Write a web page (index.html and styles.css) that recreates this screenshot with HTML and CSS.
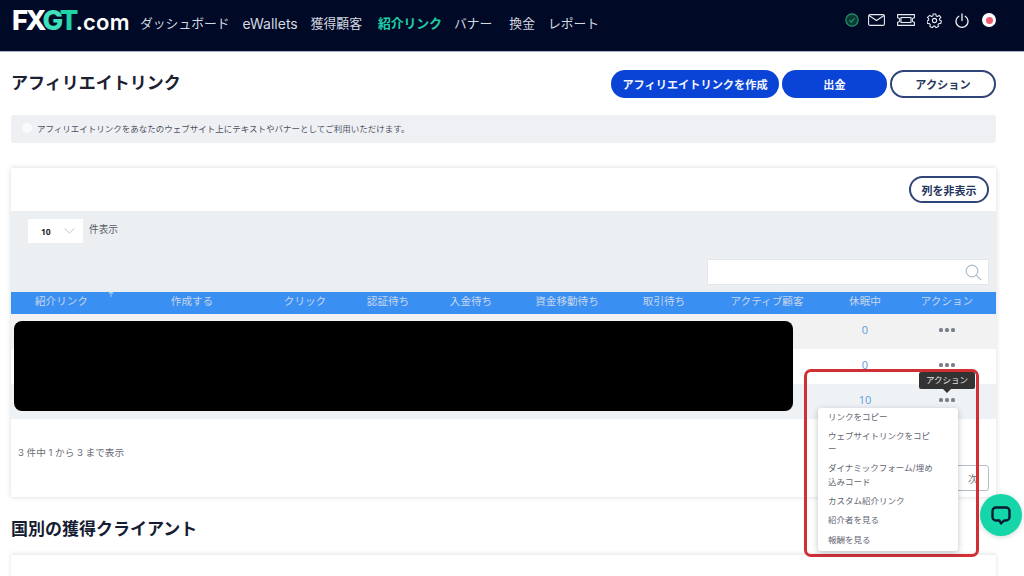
FILE: index.html
```html
<!DOCTYPE html>
<html lang="ja">
<head>
<meta charset="utf-8">
<title>アフィリエイトリンク</title>
<link rel="stylesheet" href="styles.css">
</head>
<body>
<header class="topbar">
  <div class="logo"><span>FX</span><span class="logo-g">G</span><span class="logo-t">T</span><span class="logo-com">.com</span></div>
  <nav class="nav">
    <a>ダッシュボード</a><a class="nav-latin">eWallets</a><a>獲得顧客</a><a class="active">紹介リンク</a><a class="nav-tight">バナー</a><a class="nav-wide">換金</a><a>レポート</a>
  </nav>
  <div class="tools">
    <svg class="tool tool-check" width="14" height="14" viewBox="0 0 16 16" fill="#0c3a35" stroke="#1f9d6e" stroke-width="1.300"><circle cx="8" cy="8" r="7"/><path fill="none" d="M5 8.200l2.200 2.200 3.800-4.400"/></svg>
    <svg class="tool" width="17" height="12" viewBox="0 0 17 12" fill="none" stroke="#e8eaf0" stroke-width="1.100"><rect x=".6" y=".6" width="15.800" height="10.800" rx="1.500"/><path d="M1 1.500l7.500 5 7.500-5"/></svg>
    <svg class="tool" width="18" height="12" viewBox="0 0 18 12" fill="none" stroke="#e8eaf0" stroke-width="1.100"><path d="M.6.600h16.800v3.200a2.200 2.200 0 0 0 0 4.400v3.200H.6V8.200a2.200 2.200 0 0 0 0-4.400z"/><rect x="4" y="3.500" width="10" height="5"/></svg>
    <svg class="tool" width="15" height="15" viewBox="0 0 24 24" fill="none" stroke="#e8eaf0" stroke-width="1.700" stroke-linejoin="round"><circle cx="12" cy="12" r="3.400"/><path d="M10 1.500h4l.7 3.200 2 .9 2.800-1.800 2.700 3.300-2.200 2.300.4 2.100 2.600 1.300-1 4.100-3 .1-1.400 1.700.7 3-3.900 1.800-1.900-2.500h-2.100l-1.900 2.500-3.900-1.800.7-3-1.400-1.700-3-.1-1-4.100 2.600-1.300.4-2.100-2.200-2.300L4.500 3.800l2.800 1.800 2-.9z"/></svg>
    <svg class="tool tool-far" width="14" height="15" viewBox="0 0 14 15" fill="none" stroke="#f2f3f6" stroke-width="1.300" stroke-linecap="round"><path d="M7 1v6.500"/><path d="M3.800 3.300a6 6 0 1 0 6.400 0"/></svg>
    <span class="flag tool-far"><i></i></span>
  </div>
</header>

<main class="page">
  <div class="title-row">
    <h1>アフィリエイトリンク</h1>
    <div class="actions">
      <button class="btn btn-solid btn-create">アフィリエイトリンクを作成</button>
      <button class="btn btn-solid btn-wd">出金</button>
      <button class="btn btn-line btn-action">アクション</button>
    </div>
  </div>
  <div class="notice"><span class="notice-dot"></span>アフィリエイトリンクをあなたのウェブサイト上にテキストやバナーとしてご利用いただけます。</div>

  <section class="card">
    <div class="card-top"><button class="btn btn-line btn-cols">列を非表示</button></div>
    <div class="filters">
      <div class="length">
        <div class="select"><b>10</b><svg width="11" height="6" viewBox="0 0 11 6" fill="none" stroke="#c3c9cf"><path d="M.5.500l5 4.500 5-4.500"/></svg></div>
        <span>件表示</span>
      </div>
      <div class="search">
        <svg width="17" height="17" viewBox="0 0 17 17" fill="none" stroke="#aebccb" stroke-width="1.200"><circle cx="7" cy="7" r="5.800"/><path d="M11.200 11.200l5 5"/></svg>
      </div>
    </div>
    <div class="table">
      <div class="thead">
        <span class="first">紹介リンク<i class="sort">↑</i></span><span>作成する</span><span>クリック</span><span>認証待ち</span><span>入金待ち</span><span>資金移動待ち</span><span>取引待ち</span><span>アクティブ顧客</span><span>休眠中</span><span>アクション</span>
      </div>
      <div class="row row-grey"><a class="num">0</a><span class="dots"><i></i><i></i><i></i></span></div>
      <div class="row"><a class="num">0</a><span class="dots"><i></i><i></i><i></i></span></div>
      <div class="row row-blue"><a class="num">10</a><span class="dots"><i></i><i></i><i></i></span></div>
    </div>
    <div class="card-foot">
      <span class="info">3 件中 1 から 3 まで表示</span>
      <button class="next">次</button>
    </div>
  </section>

  <h2>国別の獲得クライアント</h2>
  <section class="card card-next"></section>

  <div class="redact"></div>
  <div class="redbox"></div>
  <div class="tooltip">アクション</div>
  <ul class="menu">
    <li>リンクをコピー</li>
    <li>ウェブサイトリンクをコピ<br>ー</li>
    <li>ダイナミックフォーム/埋め<br>込みコード</li>
    <li>カスタム紹介リンク</li>
    <li>紹介者を見る</li>
    <li>報酬を見る</li>
  </ul>
</main>

<div class="chat">
  <svg width="20" height="19" viewBox="0 0 20 19" fill="none" stroke="#0a1a33" stroke-width="2.400" stroke-linejoin="round"><path d="M5 1.500h10a3.500 3.500 0 0 1 3.500 3.500v6a3.500 3.500 0 0 1-3.500 3.500h-2l-3 3-1.500-3H5A3.500 3.500 0 0 1 1.500 11V5A3.500 3.500 0 0 1 5 1.500z"/></svg>
</div>
</body>
</html>
```
FILE: styles.css
```css
* { box-sizing: border-box; }
html, body { margin: 0; padding: 0; height: 576px; overflow: hidden; background: #fff; }
body { font-family: Inter, "Noto Sans CJK JP", "Noto Sans", sans-serif; color: #1d2233; position: relative; }

.topbar { height: 52px; background: #000a26; border-bottom: 1px solid #a9b4c8; display: flex; align-items: flex-start; padding-left: 12px; }
.logo { width: 128px; height: 40px; font-family: Inter, sans-serif; font-size: 27.500px; font-weight: 800; color: #fff; letter-spacing: -2.500px; line-height: 40px; white-space: nowrap; }
.logo-g { color: #3fe0bd; }
.logo-t { color: #1fd3a9; }
.logo-com { font-size: 22px; font-weight: 600; letter-spacing: .2px; }
.nav { display: flex; gap: 13px; font-size: 12.800px; line-height: 48px; color: #d5d9e2; white-space: nowrap; }
.nav .nav-latin { font-size: 14px; }
.nav .active { color: #1fd0a6; font-weight: 700; margin-left: 3px; }
.nav .nav-tight { margin-left: -1px; }
.nav .nav-wide { margin-left: 4px; }
.tools { margin-left: auto; margin-right: 28px; margin-top: 14px; display: flex; align-items: center; gap: 12px; height: 12px; }
.tool { display: block; flex: none; }
.tool-check { margin-right: -3px; }
.tool-far { margin-left: 1px; }
.flag { width: 14px; height: 14px; border-radius: 50%; background: #fff; display: flex; align-items: center; justify-content: center; }
.flag i { width: 7px; height: 7px; border-radius: 50%; background: #ef5a6e; }

.page { position: relative; padding: 0 28px 0 11px; height: 524px; overflow: hidden; }
.title-row { display: flex; justify-content: space-between; align-items: flex-start; padding-top: 18px; height: 63px; }
h1 { margin: 0; font-size: 17px; line-height: 26px; font-weight: 700; color: #1c2030; }
.actions { display: flex; gap: 3px; }
.btn { height: 28px; border-radius: 14px; font-family: inherit; font-size: 11.200px; font-weight: 700; padding: 0; cursor: pointer; }
.btn-solid { background: #0a44d6; color: #f3f5ff; border: 0; }
.btn-line { background: #fff; color: #2a3a5e; border: 2px solid #2f4577; }
.btn-create { width: 168px; }
.btn-wd { width: 105px; }
.btn-action { width: 106px; }

.notice { height: 28px; background: #eff0f4; border-radius: 3px; display: flex; align-items: center; padding: 0 0 3px 11px; gap: 5px; font-size: 8.500px; color: #4d5260; white-space: nowrap; }
.notice-dot { width: 10px; height: 10px; border-radius: 50%; background: #fafbfc; }

.card { margin-top: 25px; background: #fff; box-shadow: 0 0 5px rgba(40, 50, 70, .18); height: 329px; }
.card-top { height: 43px; display: flex; justify-content: flex-end; align-items: flex-start; padding: 8px 7px 0 0; }
.btn-cols { width: 80px; height: 27px; font-size: 11px; color: #22335c; }
.filters { height: 81px; background: #ebeff1; position: relative; display: flex; flex-direction: column; justify-content: space-between; padding: 8px 7px 7px 17px; }
.length { display: flex; align-items: flex-start; gap: 6px; font-size: 9.700px; color: #555b66; }
.length span { line-height: 22px; }
.select { width: 55px; height: 24px; background: #fff; display: flex; align-items: center; justify-content: space-between; padding: 0 8px 0 13px; font-size: 8.500px; color: #222; }
.select b { font-family: "Open Sans", sans-serif; }
.search { align-self: flex-end; width: 282px; height: 26px; background: #fff; border: 1px solid #e3e7eb; display: flex; align-items: center; justify-content: flex-end; padding-right: 6px; }

.table { height: 127px; }
.thead { height: 22px; padding-bottom: 6px; background: #3a8ff3; display: grid; grid-template-columns: 105px 152px 74px 92px 74px 118px 76px 130px 66px 98px; align-items: center; text-align: center; font-size: 10.600px; color: #c9d6ea; white-space: nowrap; }
.thead .first { text-align: left; padding-left: 24px; position: relative; }
.sort { position: absolute; left: 97px; top: -2px; font-style: normal; font-size: 7px; line-height: 8px; color: #dfe8f5; }
.row { height: 35px; padding-bottom: 4px; display: grid; grid-template-columns: 821px 66px 98px; align-items: center; text-align: center; font-size: 11px; }
.row-grey { background: #f2f2f2; }
.row-blue { background: #eef2f5; }
.num { grid-column: 2; color: #5a9cdb; font-family: "Open Sans", sans-serif; }
.dots { grid-column: 3; display: flex; justify-content: center; gap: 2px; }
.dots i { width: 4px; height: 4px; border-radius: 1.500px; background: #7b818c; }
.card-foot { height: 78px; display: flex; justify-content: space-between; align-items: flex-start; padding: 26px 7px 0 7px; font-size: 9.600px; color: #6a6d75; }
.next { width: 48px; height: 26px; margin-top: 20px; background: #fff; border: 1px solid #b5bcc4; border-radius: 3px; font-family: inherit; font-size: 10px; color: #6a6d75; padding: 0 0 0 16px; }

h2 { margin: 18px 0 0; font-size: 17px; line-height: 28px; font-weight: 700; color: #161c32; }
.card-next { margin-top: 12px; height: 40px; box-shadow: 0 -1px 4px rgba(40, 50, 70, .14); }

/* overlays */
.redact { position: absolute; left: 14px; top: 269px; width: 779px; height: 90px; background: #000; border-radius: 8px; }
.redbox { position: absolute; left: 804px; top: 317px; width: 175px; height: 188px; border: 3px solid #d22f35; border-radius: 7px; }
.tooltip { position: absolute; left: 919px; top: 320px; width: 56px; height: 17px; background: #333; color: #e6e6e6; font-size: 8.500px; line-height: 17px; text-align: center; border-radius: 2px; }
.tooltip::after { content: ""; position: absolute; left: 24px; top: 17px; border: 4px solid transparent; border-top-color: #333; border-bottom: 0; }
.menu { position: absolute; left: 818px; top: 356px; width: 140px; height: 143px; margin: 0; padding: 3px 10px 0; list-style: none; background: #fff; border-radius: 3px; box-shadow: 0 2px 6px rgba(30, 40, 60, .28); font-size: 8.500px; line-height: 13.500px; color: #5f6470; }
.menu li { margin-bottom: 5.800px; white-space: nowrap; }
.menu li:first-child { margin-bottom: 5px; }
.chat { position: absolute; left: 980px; top: 494px; width: 42px; height: 42px; border-radius: 50%; background: #14d6a8; box-shadow: 0 1px 5px rgba(20, 60, 60, .2); display: flex; align-items: center; justify-content: center; }
```
